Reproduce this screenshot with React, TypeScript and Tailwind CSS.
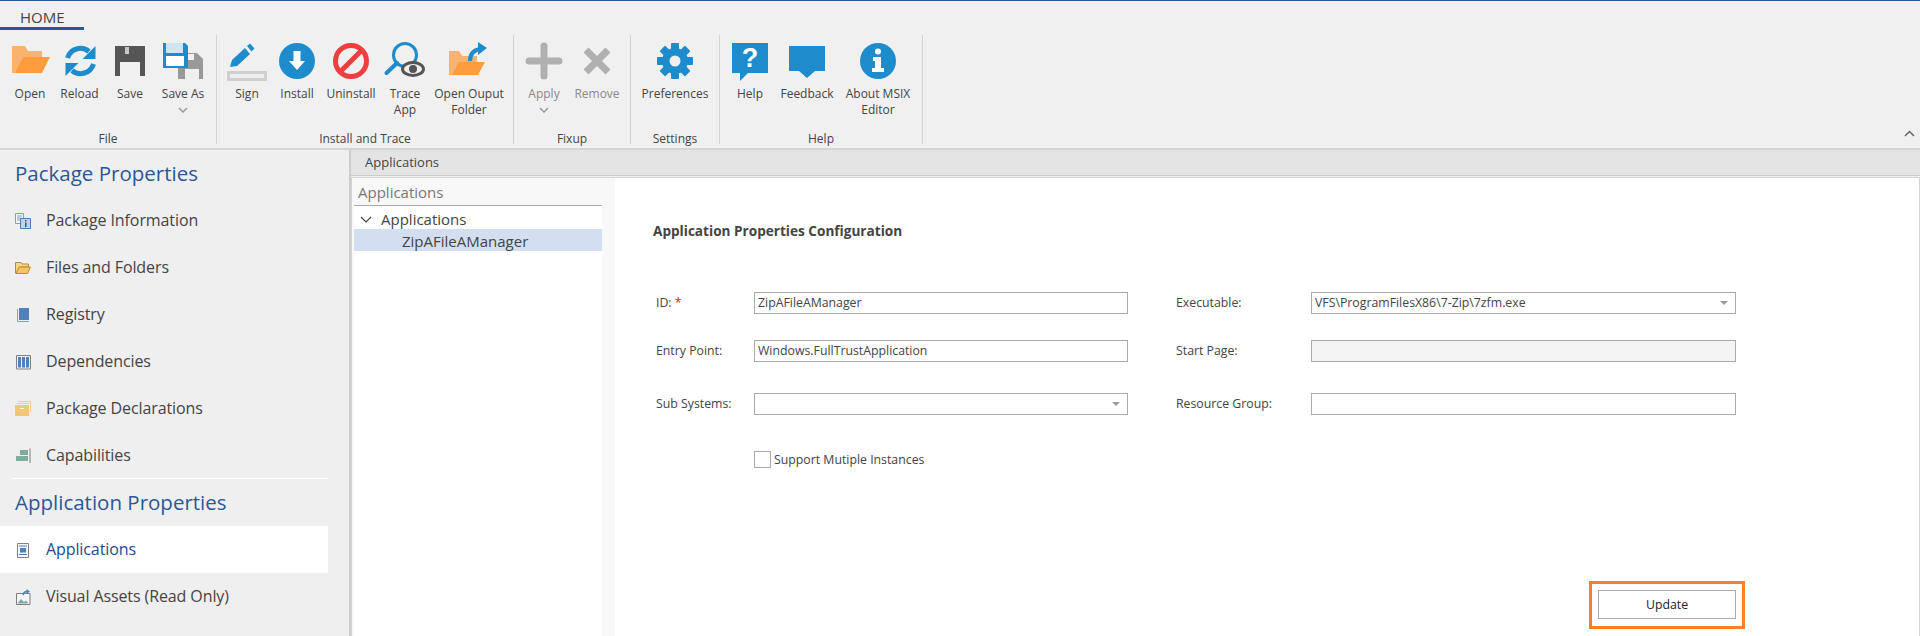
import type { ReactNode } from "react"

const blue = "#1e8bcd"
const grey = "#b0b0b0"

function Ico({ children }: { children: ReactNode }) {
  return (
    <svg viewBox="0 0 44 42" className="w-[44px] h-[42px] shrink-0 overflow-visible">
      {children}
    </svg>
  )
}

function Folder() {
  return (
    <>
      <path d="M4 6H17L20 11H34V17H15L8 33H4Z" fill="#f9b36e" />
      <path d="M15 17H42L34 33H7Z" fill="#ff9c3d" />
    </>
  )
}

const icons: Record<string, ReactNode> = {
  open: <Ico><Folder /></Ico>,
  reload: (
    <Ico>
      <g fill="none" stroke={blue} strokeWidth="5">
        <path d="M9.5 18A13.5 13.5 0 0 1 31 11.5" />
        <path d="M35.5 24A13.5 13.5 0 0 1 14 30.5" />
      </g>
      <path d="M37.5 6V19H24.5Z M7.5 36V23H20.5Z" fill={blue} />
    </Ico>
  ),
  save: (
    <Ico>
      <path d="M7 6H37V36H7Z" fill="#565656" />
      <path d="M12 22H32V36H12Z" fill="#f0f0f0" />
      <path d="M17 7H21V14H17Z" fill="#c8c8c8" />
    </Ico>
  ),
  saveAs: (
    <Ico>
      <path d="M23 13H36L42 19V39H17V27H23Z" fill="#999999" />
      <path d="M24 29H38V39H24Z" fill="#f0f0f0" />
      <path d="M27 14H33V20H27Z" fill="#f0f0f0" />
      <path d="M2 3H24L27 6V28H2Z" fill={blue} />
      <path d="M5 3H22V13H5Z" fill="#cfe4f4" />
      <path d="M5 16H23V26H5Z" fill="#ffffff" />
    </Ico>
  ),
  sign: (
    <Ico>
      <path d="M3.5 32.5H40.5V39.5H3.5Z" fill="#eeeeee" stroke="#cfcfcf" strokeWidth="3" />
      <path d="M5 27L7 20L20 8L25 14L12 26Z" fill={blue} />
      <path d="M22 6L25 3.500L29.500 8.500L26.500 11.500Z" fill={blue} />
    </Ico>
  ),
  install: (
    <Ico>
      <circle cx="22" cy="21" r="18" fill={blue} />
      <path d="M18.500 11H25.500V21H30L22 30L14 21H18.500Z" fill="#ffffff" />
    </Ico>
  ),
  uninstall: (
    <Ico>
      <circle cx="22" cy="21" r="15.500" fill="none" stroke="#ef3e3e" strokeWidth="5" />
      <path d="M11 32L33 10" stroke="#ef3e3e" strokeWidth="5" />
    </Ico>
  ),
  trace: (
    <Ico>
      <circle cx="22" cy="15" r="11.500" fill="none" stroke={blue} strokeWidth="3" />
      <path d="M3.500 33L14 23" stroke={blue} strokeWidth="4" strokeLinecap="round" />
      <ellipse cx="30" cy="29" rx="10.500" ry="6.500" fill="#f0f0f0" stroke="#555555" strokeWidth="3" />
      <circle cx="30" cy="29" r="4" fill="#555555" />
    </Ico>
  ),
  output: (
    <Ico>
      <path d="M2 11H12L15 16H30V22H11L5 35H2Z" fill="#f9b36e" />
      <path d="M11 22H38L31 35H5Z" fill="#ff9c3d" />
      <path d="M23 21C23 14 27 10 33 9" fill="none" stroke={blue} strokeWidth="4" />
      <path d="M40 8L31 2V15Z" fill={blue} />
    </Ico>
  ),
  apply: (
    <Ico>
      <path d="M22 6V36M7 21H37" stroke={grey} strokeWidth="7" strokeLinecap="round" fill="none" />
    </Ico>
  ),
  remove: (
    <Ico>
      <path d="M11 10L33 32M33 10L11 32" stroke={grey} strokeWidth="7" fill="none" />
    </Ico>
  ),
  prefs: (
    <Ico>
      {[0, 45, 90, 135, 180, 225, 270, 315].map((a) => (
        <rect key={a} x="18" y="3" width="8" height="8" rx="1" fill={blue} transform={`rotate(${a} 22 21)`} />
      ))}
      <circle cx="22" cy="21" r="13" fill={blue} />
      <circle cx="22" cy="21" r="5.500" fill="#f0f0f0" />
    </Ico>
  ),
  help: (
    <Ico>
      <path d="M4 3H40V33H20L12 41V33H4Z" fill={blue} />
      <text x="22" y="27" textAnchor="middle" fontSize="27" fontWeight="700" fill="#ffffff" fontFamily="'Liberation Sans', sans-serif">?</text>
    </Ico>
  ),
  feedback: (
    <Ico>
      <path d="M4 6H40V31H30L22 38L14 31H4Z" fill={blue} />
    </Ico>
  ),
  about: (
    <Ico>
      <circle cx="22" cy="21" r="18" fill={blue} />
      <circle cx="22" cy="11.500" r="3" fill="#ffffff" />
      <path d="M17 17H25V28H28V32H16V28H19V21H17Z" fill="#ffffff" />
    </Ico>
  ),
}

type Btn = { key: string; w: string; lines: string[]; off?: boolean; arrow?: boolean }
type Group = { label: string; w: string; pl: string; buttons: Btn[] }

const groups: Group[] = [
  {
    label: "File",
    w: "w-[217px]",
    pl: "pl-[6px]",
    buttons: [
      { key: "open", w: "w-[48px]", lines: ["Open"] },
      { key: "reload", w: "w-[51px]", lines: ["Reload"] },
      { key: "save", w: "w-[50px]", lines: ["Save"] },
      { key: "saveAs", w: "w-[56px]", lines: ["Save As"], arrow: true },
    ],
  },
  {
    label: "Install and Trace",
    w: "w-[297px]",
    pl: "pl-[5px]",
    buttons: [
      { key: "sign", w: "w-[50px]", lines: ["Sign"] },
      { key: "install", w: "w-[50px]", lines: ["Install"] },
      { key: "uninstall", w: "w-[58px]", lines: ["Uninstall"] },
      { key: "trace", w: "w-[50px]", lines: ["Trace", "App"] },
      { key: "output", w: "w-[78px]", lines: ["Open Ouput", "Folder"] },
    ],
  },
  {
    label: "Fixup",
    w: "w-[117px]",
    pl: "pl-[6px]",
    buttons: [
      { key: "apply", w: "w-[48px]", lines: ["Apply"], off: true, arrow: true },
      { key: "remove", w: "w-[58px]", lines: ["Remove"], off: true },
    ],
  },
  {
    label: "Settings",
    w: "w-[89px]",
    pl: "pl-[0px]",
    buttons: [{ key: "prefs", w: "w-[88px]", lines: ["Preferences"] }],
  },
  {
    label: "Help",
    w: "w-[203px]",
    pl: "pl-[5px]",
    buttons: [
      { key: "help", w: "w-[50px]", lines: ["Help"] },
      { key: "feedback", w: "w-[64px]", lines: ["Feedback"] },
      { key: "about", w: "w-[78px]", lines: ["About MSIX", "Editor"] },
    ],
  },
]

function Ribbon() {
  return (
    <div className="h-[150px] shrink-0 border-t border-[#2b579a] border-b-2 border-b-[#d5d5d5] relative">
      <div className="h-[29px]">
        <div className="w-[84px] h-[29px] border-b-[3px] border-[#2b579a] pl-[20px] pt-[6px] text-[15px] leading-[20px] text-[#444]">
          HOME
        </div>
      </div>
      <div className="flex mt-[5px] h-[109px]">
        {groups.map((g) => (
          <div key={g.label} className={`${g.w} border-r border-[#d2d2d2] flex flex-col`}>
            <div className={`flex ${g.pl} pt-[5px] h-[98px] shrink-0`}>
              {g.buttons.map((b) => (
                <div key={b.key} className={`${b.w} flex flex-col items-center`}>
                  {icons[b.key]}
                  <div className={`mt-[4px] text-center text-[12px] leading-[16px] whitespace-nowrap ${b.off ? "text-[#8a8a8a]" : "text-[#444]"}`}>
                    {b.lines.map((l) => (
                      <div key={l}>{l}</div>
                    ))}
                  </div>
                  {b.arrow && (
                    <svg viewBox="0 0 10 6" className="w-[10px] h-[6px] mt-[5px]">
                      <path d="M1 1L5 5L9 1" fill="none" stroke="#9a9a9a" strokeWidth="1.500" />
                    </svg>
                  )}
                </div>
              ))}
            </div>
            <div className="text-center text-[12px] leading-[11px] text-[#444]">{g.label}</div>
          </div>
        ))}
      </div>
      <svg viewBox="0 0 11 7" className="absolute right-[5px] top-[129px] w-[11px] h-[7px]">
        <path d="M1 6L5.500 1.500L10 6" fill="none" stroke="#666666" strokeWidth="1.500" />
      </svg>
    </div>
  )
}

const sideIcons: Record<string, ReactNode> = {
  info: (
    <svg viewBox="0 0 16 16" className="w-4 h-4 shrink-0">
      <path d="M0.500 0.500H8.500V10.500H0.500Z" fill="#f4f7fb" stroke="#7f9fc4" />
      <path d="M2 3H7M2 5H6M2 7H5" stroke="#7f9fc4" />
      <path d="M5.500 5.500H15.500V15.500H5.500Z" fill="#bcd5ee" stroke="#4a7fbd" />
      <path d="M10 7H11.500V8.500H10ZM10 9.500H11.500V14H10Z" fill="#2b579a" />
    </svg>
  ),
  folder: (
    <svg viewBox="0 0 16 16" className="w-4 h-4 shrink-0">
      <path d="M0.500 2.500H6L7 4H13.500V7H5L1.500 13H0.500Z" fill="#f6d68e" stroke="#b98a35" />
      <path d="M4 7H15.500L12.500 13.500H1Z" fill="#f5c469" stroke="#c28a2c" />
    </svg>
  ),
  book: (
    <svg viewBox="0 0 16 16" className="w-4 h-4 shrink-0">
      <path d="M4 1H14V13H4Z" fill="#4f81bd" />
      <path d="M2.500 2V14.500H14" fill="none" stroke="#7ea3cf" />
    </svg>
  ),
  deps: (
    <svg viewBox="0 0 16 16" className="w-4 h-4 shrink-0">
      <path d="M1.500 1.500H15.500V15H1.500Z" fill="#eef2f7" stroke="#808080" />
      <path d="M3 3H6V13.500H3ZM7 3H10V13.500H7ZM11 3H14V13.500H11Z" fill="#4f81bd" />
    </svg>
  ),
  box: (
    <svg viewBox="0 0 16 16" className="w-4 h-4 shrink-0">
      <path d="M3 0.500H15.500V11" fill="none" stroke="#f3cd86" />
      <path d="M1.500 2.500H14" fill="none" stroke="#f3cd86" />
      <path d="M0 4H14V15H0Z" fill="#f2c778" />
      <path d="M5 7H9V8H5Z" fill="#ffffff" />
    </svg>
  ),
  cap: (
    <svg viewBox="0 0 16 16" className="w-4 h-4 shrink-0">
      <path d="M5 2H13V7H5ZM1 8H13V13H1Z" fill="#7eab9b" />
      <path d="M15 0.500V15" stroke="#808080" />
    </svg>
  ),
  app: (
    <svg viewBox="0 0 16 16" className="w-4 h-4 shrink-0">
      <path d="M2.500 1.500H13.500V15.500H2.500Z" fill="#f5f7fa" stroke="#808080" />
      <path d="M4 4H12M4 12.500H12" stroke="#4f81bd" />
      <path d="M5 6H11V10.500H5Z" fill="#4f81bd" />
    </svg>
  ),
  visual: (
    <svg viewBox="0 0 16 16" className="w-4 h-4 shrink-0">
      <path d="M1.500 4.500H15V15.500H1.500Z" fill="#f5f5f5" stroke="#808080" />
      <path d="M2.500 14.500L6 10L9 13L11 11.500L13.500 14.500Z" fill="#7eab9b" />
      <path d="M8 6C8.500 3.500 10 2.500 12 2.500" fill="none" stroke="#4f81bd" strokeWidth="1.500" />
      <path d="M15 2.500L11.500 0V5Z" fill="#4f81bd" />
    </svg>
  ),
}

function SideItem({ icon, label, active }: { icon: string; label: string; active?: boolean }) {
  return (
    <div className={`h-[47px] flex items-center pl-[15px] gap-[15px] text-[16px] tracking-[-0.1px] ${active ? "bg-white w-[328px] text-[#1a4c96]" : "text-[#444]"}`}>
      {sideIcons[icon]}
      <span className="-mt-[1px]">{label}</span>
    </div>
  )
}

function Sidebar() {
  return (
    <div className="w-[351px] shrink-0 border-r-2 border-[#cccccc] bg-[#efefef]">
      <div className="h-[47px] flex items-center pl-[15px] text-[20.5px] text-[#2b579a]">Package Properties</div>
      <SideItem icon="info" label="Package Information" />
      <SideItem icon="folder" label="Files and Folders" />
      <SideItem icon="book" label="Registry" />
      <SideItem icon="deps" label="Dependencies" />
      <SideItem icon="box" label="Package Declarations" />
      <SideItem icon="cap" label="Capabilities" />
      <div className="ml-[12px] w-[316px] h-px bg-white -mt-px" />
      <div className="h-[47px] flex items-center pl-[15px] text-[20.5px] text-[#2b579a]">Application Properties</div>
      <SideItem icon="app" label="Applications" active />
      <SideItem icon="visual" label="Visual Assets (Read Only)" />
    </div>
  )
}

function Field({ value, select, off, w }: { value?: string; select?: boolean; off?: boolean; w: string }) {
  return (
    <div className={`${w} h-[22px] border border-[#ababab] flex items-center justify-between pl-[3px] pr-[7px] text-[#444] ${off ? "bg-[#f4f4f4]" : "bg-white"}`}>
      <span>{value}</span>
      {select && <span className="w-0 h-0 border-x-[4px] border-x-transparent border-t-[4px] border-t-[#9a9a9a]" />}
    </div>
  )
}

function Row({ left, right, mt }: { left: ReactNode; right: ReactNode; mt: string }) {
  return (
    <div className={`flex items-center ${mt}`}>
      {left}
      {right}
    </div>
  )
}

function Form() {
  return (
    <div className="flex-1 bg-white pl-[41px] text-[12.3px] text-[#444]">
      <div className="-ml-[3px] pt-[44px] h-[63px] text-[13.6px] leading-[18px] font-bold">Application Properties Configuration</div>
      <Row
        mt="mt-[51px]"
        left={<span className="w-[98px]">ID: <span className="text-[#e8112d]">*</span></span>}
        right={
          <>
            <Field w="w-[374px]" value="ZipAFileAManager" />
            <span className="ml-[48px] w-[135px]">Executable:</span>
            <Field w="w-[425px]" value="VFS\ProgramFilesX86\7-Zip\7zfm.exe" select />
          </>
        }
      />
      <Row
        mt="mt-[26px]"
        left={<span className="w-[98px]">Entry Point:</span>}
        right={
          <>
            <Field w="w-[374px]" value="Windows.FullTrustApplication" />
            <span className="ml-[48px] w-[135px]">Start Page:</span>
            <Field w="w-[425px]" off />
          </>
        }
      />
      <Row
        mt="mt-[31px]"
        left={<span className="w-[98px]">Sub Systems:</span>}
        right={
          <>
            <Field w="w-[374px]" select />
            <span className="ml-[48px] w-[135px]">Resource Group:</span>
            <Field w="w-[425px]" />
          </>
        }
      />
      <div className="ml-[98px] mt-[36px] flex items-center gap-[3px] h-[17px]">
        <span className="w-[17px] h-[17px] border border-[#ababab] bg-white" />
        <span className="mt-[2px]">Support Mutiple Instances</span>
      </div>
      <div className="ml-[933px] mt-[113px] w-[156px] h-[48px] border-[3px] border-[#ff7f27] pl-[6px] pt-[6px]">
        <div className="w-[138px] h-[29px] border border-[#ababab] flex items-center justify-center pt-[1px] text-[#1a1a2e]">Update</div>
      </div>
    </div>
  )
}

function Tree() {
  return (
    <div className="w-[248px] shrink-0 bg-white text-[15px]">
      <div className="h-[28px] bg-[#f8f8f8] border-b border-[#aaaaaa] pl-[4px] leading-[28px] text-[#777]">Applications</div>
      <div className="h-[23px] flex items-center pt-[4px] pl-[6px] gap-[9px] text-[#444]">
        <svg viewBox="0 0 12 8" className="w-[12px] h-[8px]">
          <path d="M1 1L6 6L11 1" fill="none" stroke="#444444" strokeWidth="1.200" />
        </svg>
        <span>Applications</span>
      </div>
      <div className="h-[22px] bg-[#d3dff0] flex items-center pt-[2px] pl-[48px] text-[#444]">ZipAFileAManager</div>
    </div>
  )
}

export default function App() {
  return (
    <div
      className="w-[1920px] h-[636px] overflow-hidden flex flex-col bg-[#f0f0f0]"
      style={{ fontFamily: "'Open Sans', 'Liberation Sans', sans-serif" }}
    >
      <Ribbon />
      <div className="flex-1 flex min-h-0">
        <Sidebar />
        <div className="flex-1 flex flex-col min-w-0">
          <div className="h-[26px] shrink-0 bg-[#e4e4e4] border-b border-[#cccccc] pl-[14px] text-[13px] leading-[25px] text-[#444]">
            Applications
          </div>
          <div className="flex-1 flex min-h-0 mt-px pl-[2px] bg-[#f8f8f8] border-t border-x border-[#d5d5d5]">
            <Tree />
            <div className="w-[13px] shrink-0 bg-[#f8f8f8]" />
            <Form />
          </div>
        </div>
      </div>
    </div>
  )
}
